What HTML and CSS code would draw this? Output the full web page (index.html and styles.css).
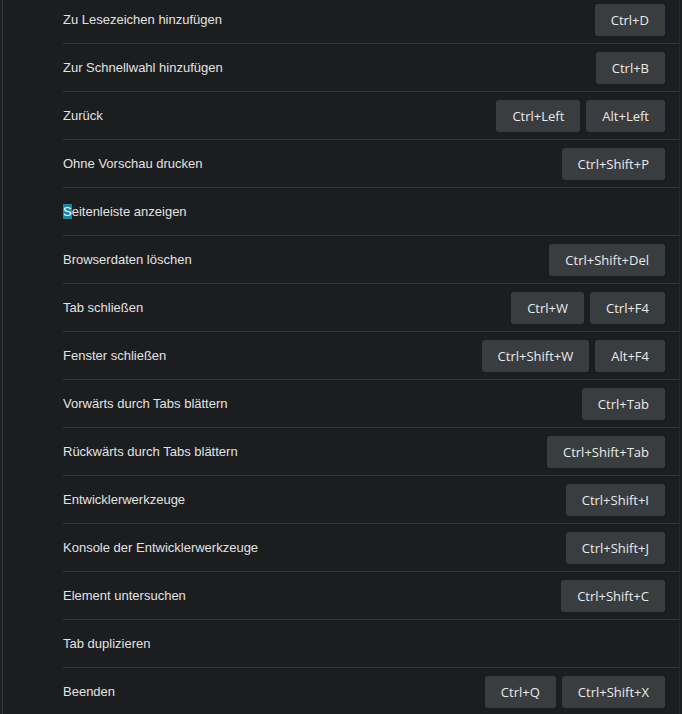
FILE: index.html
```html
<!DOCTYPE html>
<html lang="de">
<head>
    <meta charset="UTF-8">
    <meta name="viewport" content="width=device-width, initial-scale=1.0">
    <title>Tastenkürzel</title>
    <link rel="stylesheet" href="styles.css">
</head>
<body>
    <div class="panel">
        <ul class="shortcuts">
            <li class="shortcut">
                <span class="label">Zu Lesezeichen hinzufügen</span>
                <div class="keys"><span class="key">Ctrl+D</span></div>
            </li>
            <li class="shortcut">
                <span class="label">Zur Schnellwahl hinzufügen</span>
                <div class="keys"><span class="key">Ctrl+B</span></div>
            </li>
            <li class="shortcut">
                <span class="label">Zurück</span>
                <div class="keys"><span class="key">Ctrl+Left</span><span class="key">Alt+Left</span></div>
            </li>
            <li class="shortcut">
                <span class="label">Ohne Vorschau drucken</span>
                <div class="keys"><span class="key">Ctrl+Shift+P</span></div>
            </li>
            <li class="shortcut">
                <span class="label"><span class="selected">S</span>eitenleiste anzeigen</span>
                <div class="keys"></div>
            </li>
            <li class="shortcut">
                <span class="label">Browserdaten löschen</span>
                <div class="keys"><span class="key">Ctrl+Shift+Del</span></div>
            </li>
            <li class="shortcut">
                <span class="label">Tab schließen</span>
                <div class="keys"><span class="key">Ctrl+W</span><span class="key">Ctrl+F4</span></div>
            </li>
            <li class="shortcut">
                <span class="label">Fenster schließen</span>
                <div class="keys"><span class="key">Ctrl+Shift+W</span><span class="key">Alt+F4</span></div>
            </li>
            <li class="shortcut">
                <span class="label">Vorwärts durch Tabs blättern</span>
                <div class="keys"><span class="key">Ctrl+Tab</span></div>
            </li>
            <li class="shortcut">
                <span class="label">Rückwärts durch Tabs blättern</span>
                <div class="keys"><span class="key">Ctrl+Shift+Tab</span></div>
            </li>
            <li class="shortcut">
                <span class="label">Entwicklerwerkzeuge</span>
                <div class="keys"><span class="key">Ctrl+Shift+I</span></div>
            </li>
            <li class="shortcut">
                <span class="label">Konsole der Entwicklerwerkzeuge</span>
                <div class="keys"><span class="key">Ctrl+Shift+J</span></div>
            </li>
            <li class="shortcut">
                <span class="label">Element untersuchen</span>
                <div class="keys"><span class="key">Ctrl+Shift+C</span></div>
            </li>
            <li class="shortcut">
                <span class="label">Tab duplizieren</span>
                <div class="keys"></div>
            </li>
            <li class="shortcut">
                <span class="label">Beenden</span>
                <div class="keys"><span class="key">Ctrl+Q</span><span class="key">Ctrl+Shift+X</span></div>
            </li>
        </ul>
    </div>
</body>
</html>
```

FILE: styles.css
```css
html, body {
    height: 100%;
}

body {
    margin: 0;
    background-color: #1c1d1f;
    font-family: "Liberation Sans", Arial, sans-serif;
    font-size: 13px;
    color: #e2e2e2;
    overflow: hidden;
}

.panel {
    margin: 0 2px;
    min-height: 100%;
    border-left: 1px solid #3a3b3d;
    border-right: 1px solid #26272a;
    padding-left: 60px;
}

.shortcuts {
    list-style: none;
    margin: -4px 0 0;
    padding: 0;
}

.shortcut {
    display: flex;
    align-items: center;
    justify-content: space-between;
    height: 47px;
    padding-right: 14px;
    border-bottom: 1px solid #333436;
}

.selected {
    background-color: #1788a1;
    color: #fff;
}

.keys {
    display: flex;
    gap: 6px;
}

.key {
    display: inline-block;
    height: 32px;
    line-height: 32px;
    padding: 0 16px;
    border-radius: 3px;
    background-color: #3a3d40;
    color: #eaeaea;
    font-family: "Open Sans", sans-serif;
    font-size: 13px;
}
```
